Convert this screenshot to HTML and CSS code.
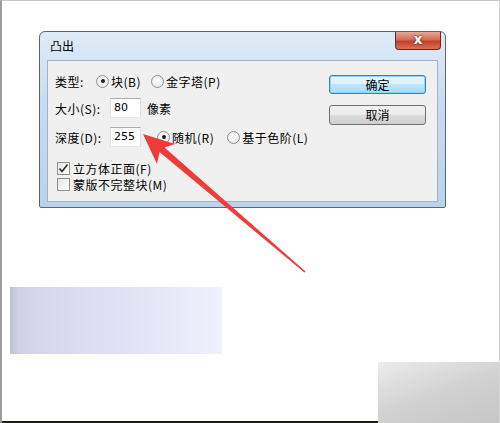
FILE: index.html
```html
<!DOCTYPE html>
<html lang="zh-CN">
<head>
  <meta charset="UTF-8">
  <meta name="viewport" content="width=device-width, initial-scale=1.0">
  <title>凸出</title>
  <link rel="stylesheet" href="styles.css">
</head>
<body>
  <div class="shot">
    <div class="dialog">
      <div class="titlebar">
        <span class="title">凸出</span>
        <span class="close">x</span>
      </div>
      <div class="panel">
        <div class="fields">
          <div class="row row-type">
            <span class="label short">类型:</span>
            <span class="radio on"></span><span class="opt">块(B)</span>
            <span class="radio"></span><span class="opt">金字塔(P)</span>
          </div>
          <div class="row row-size">
            <span class="label">大小(S):</span>
            <span class="input">80</span>
            <span class="unit">像素</span>
          </div>
          <div class="row row-depth">
            <span class="label">深度(D):</span>
            <span class="input">255</span>
            <span class="radio on"></span><span class="opt wide">随机(R)</span>
            <span class="radio"></span><span class="opt">基于色阶(L)</span>
          </div>
          <div class="check-row first">
            <span class="check">
              <svg width="11" height="11" viewBox="0 0 11 11"><path d="M1.5 5.5 L4 8.5 L9.5 1.5" fill="none" stroke="#2b2b2b" stroke-width="1.6"/></svg>
            </span>
            <span class="opt">立方体正面(F)</span>
          </div>
          <div class="check-row">
            <span class="check"></span>
            <span class="opt">蒙版不完整块(M)</span>
          </div>
        </div>
        <div class="actions">
          <button class="btn default">确定</button>
          <button class="btn">取消</button>
        </div>
      </div>
    </div>

    <div class="strip"></div>

    <div class="bottom">
      <div class="edge"></div>
      <div class="corner"></div>
    </div>

    <svg class="arrow" width="500" height="423" viewBox="0 0 500 423">
      <polygon points="143,134 175,144 164.5,147.5 305.6,271.4 304.4,272.6 159.5,152 157,164" fill="#ee3b3b"/>
    </svg>
  </div>
</body>
</html>
```

FILE: styles.css
```css
body {
  margin: 0;
  background-color: #ffffff;
  font-family: "Noto Sans CJK SC", "DejaVu Sans", sans-serif;
  font-size: 12px;
  color: #000;
}
.shot {
  position: relative;
  width: 500px;
  height: 423px;
  box-sizing: border-box;
  border-top: 1px solid #c8c8c8;
  border-left: 2px solid #9c9c9c;
  border-right: 1px solid #d6d6d6;
  overflow: hidden;
}
.dialog {
  margin: 30px 0 0 37px;
  width: 407px;
  height: 177px;
  box-sizing: border-box;
  border: 1px solid #5a6676;
  border-radius: 6px 6px 2px 2px;
  background: linear-gradient(to bottom, #dfeaf7, #c9dbf0 40%, #bcd2ec);
  position: relative;
}
.titlebar {
  height: 28px;
  display: flex;
  align-items: center;
  padding-left: 10px;
}
.title {
  line-height: 1;
  margin-top: -1px;
}
.close {
  position: absolute;
  top: 0;
  right: 4px;
  width: 46px;
  height: 18px;
  box-sizing: border-box;
  border: 1px solid #6b2a20;
  border-top: none;
  border-radius: 0 0 4px 4px;
  background: linear-gradient(to bottom, #e9a89b, #d46a55 45%, #c2402a 55%, #d8705a);
  color: #fff;
  font-family: "DejaVu Sans", sans-serif;
  font-weight: bold;
  font-size: 14px;
  line-height: 15px;
  text-align: center;
  text-shadow: 0 0 2px #5a1a10, 0 0 1px #5a1a10;
}
.panel {
  margin: 0 7px;
  height: 142px;
  box-sizing: border-box;
  border: 1px solid #9fb3cc;
  background-color: #f0f0f0;
  display: flex;
  justify-content: space-between;
}
.fields {
  padding: 10px 0 0 7px;
  display: flex;
  flex-direction: column;
}
.row {
  height: 20px;
  display: flex;
  align-items: center;
}
.row-size {
  margin-top: 7px;
}
.row-depth {
  margin-top: 9px;
}
.label {
  width: 55px;
  letter-spacing: 0.5px;
}
.label.short {
  width: 41px;
}
.radio {
  width: 13px;
  height: 13px;
  box-sizing: border-box;
  border: 1px solid #8e8f8f;
  border-radius: 50%;
  background: radial-gradient(circle at 50% 40%, #ffffff, #e2e2e2);
  display: flex;
  align-items: center;
  justify-content: center;
  margin-right: 2px;
}
.radio.on::after {
  content: "";
  width: 4px;
  height: 4px;
  border-radius: 50%;
  background-color: #1d1d1d;
}
.opt {
  margin-right: 10px;
  white-space: nowrap;
  letter-spacing: 0.5px;
}
.opt.wide {
  margin-right: 13px;
}
.input {
  width: 31px;
  height: 20px;
  box-sizing: border-box;
  border: 1px solid #abadb3;
  border-color: #abadb3 #dbdfe6 #e3e9ef #e2e3ea;
  background-color: #fff;
  padding-left: 3px;
  font-family: "DejaVu Sans", sans-serif;
  font-size: 11px;
  line-height: 18px;
}
.unit {
  margin-left: 6px;
}
.row-depth .input {
  margin-right: 16px;
}
.check-row {
  height: 14px;
  display: flex;
  align-items: center;
  margin-top: 2px;
}
.check-row.first {
  margin-top: 14px;
}
.check {
  width: 13px;
  height: 13px;
  box-sizing: border-box;
  border: 1px solid #8e8f8f;
  background: linear-gradient(135deg, #e6e6e6, #ffffff);
  margin: 0 3px 0 2px;
  display: flex;
  align-items: center;
  justify-content: center;
}
.actions {
  padding: 14px 11px 0 0;
  display: flex;
  flex-direction: column;
  gap: 11px;
}
.btn {
  width: 97px;
  height: 19px;
  padding: 0;
  box-sizing: border-box;
  border: 1px solid #707070;
  border-radius: 3px;
  background: linear-gradient(to bottom, #f2f2f2, #ebebeb 50%, #dddddd 50%, #cfcfcf);
  font-family: "Noto Sans CJK SC", sans-serif;
  font-size: 12px;
  line-height: 16px;
  color: #000;
}
.btn.default {
  border-color: #3c7fb1;
  background: linear-gradient(to bottom, #eaf6fd, #d9f0fc 50%, #bee6fd 50%, #a7d9f5);
  box-shadow: inset 0 0 0 1px #90d6f7;
}
.btn + .btn {
  height: 20px;
}
.strip {
  margin: 79px 0 0 8px;
  width: 212px;
  height: 67px;
  background: linear-gradient(to right, #bfbfd2, #cfcfe6 4%, #d6d6ee 15%, #dedef4 40%, #e6e6f8 70%, #f1f1fb);
}
.bottom {
  margin-top: 8px;
  height: 61px;
  display: flex;
  align-items: flex-end;
}
.edge {
  width: 376px;
  height: 2px;
  background-color: #1d2019;
}
.corner {
  flex: 1;
  height: 61px;
  background: linear-gradient(160deg, #ececec, #d2d2d2 50%, #c6c6c6);
}
.arrow {
  position: absolute;
  left: -2px;
  top: -1px;
}
```
